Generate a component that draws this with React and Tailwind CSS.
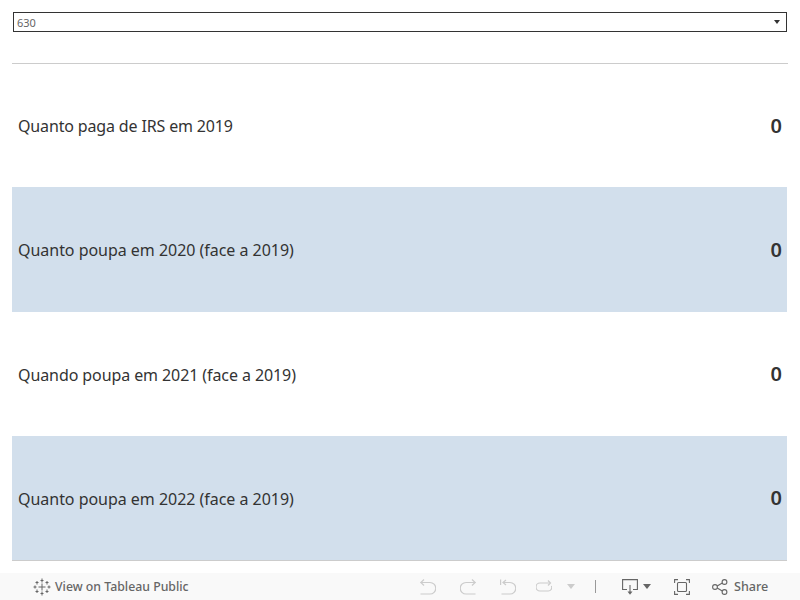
function Row({ label, shaded, value, rowH, track, valueUp }) {
  return (
    <div className={`${rowH} flex items-center justify-between pl-[6px] pr-[5px] ${shaded ? "bg-[#d2dfec]" : "bg-white"}`}>
      <span className={`text-[16px] text-[#333333] leading-none ${track}`}>{label}</span>
      <span className={`text-[20px] font-semibold text-[#333333] leading-none ${valueUp}`}>{value}</span>
    </div>
  );
}

function TableauLogo() {
  return (
    <svg width="18" height="18" viewBox="0 0 18 18" fill="none" stroke="#666666" strokeWidth="1">
      <path d="M9 5.500v7M5.500 9h7" />
      <path d="M9 0.500v4M7.500 2.500h3" />
      <path d="M9 13.500v4M7.500 15.500h3" />
      <path d="M0.500 9h3M2 7.500v3" />
      <path d="M14.500 9h3M16 7.500v3" />
      <path d="M4 3v3.500M2.500 4.500h3" />
      <path d="M14 3v3.500M12.500 4.500h3" />
      <path d="M4 11.500V15M2.500 13.500h3" />
      <path d="M14 11.500V15M12.500 13.500h3" />
    </svg>
  );
}

function Ic({ children, className = "" }) {
  return (
    <svg className={className} width="16" height="16" viewBox="0 0 16 16" fill="none" stroke="#cccccc" strokeWidth="1.2">
      {children}
    </svg>
  );
}

function DarkIc({ children, className = "" }) {
  return (
    <svg className={className} width="16" height="16" viewBox="0 0 16 16" fill="none" stroke="#666666" strokeWidth="1.1">
      {children}
    </svg>
  );
}

export default function App() {
  return (
    <div className="w-[800px] h-[600px] bg-white flex flex-col overflow-hidden font-['Noto_Sans',sans-serif]">
      <div className="pt-3 px-[13px]">
        <div className="h-5 border border-[#333333] flex items-center justify-between pl-[3px] pr-[6px]">
          <span className="text-[11px] text-[#666666] leading-none">630</span>
          <span className="w-0 h-0 border-x-[3px] border-x-transparent border-t-[4px] border-t-[#333333]" />
        </div>
      </div>
      <div className="mt-[31px] mx-3 border-t border-[#cccccc]" />
      <div className="ml-3 border-b border-[#cccccc] w-[775px]">
        <Row rowH="h-[123px]" track="tracking-[-0.15px]" valueUp="" label="Quanto paga de IRS em 2019" value="0" />
        <Row rowH="h-[125px]" track="tracking-[-0.03px]" valueUp="" label="Quanto poupa em 2020 (face a 2019)" value="0" shaded />
        <Row rowH="h-[124px] pt-[2px]" track="tracking-[-0.09px]" valueUp="-mt-[2px]" label="Quando poupa em 2021 (face a 2019)" value="0" />
        <Row rowH="h-[124px] pt-[2px]" track="tracking-[-0.03px]" valueUp="-mt-[2px]" label="Quanto poupa em 2022 (face a 2019)" value="0" shaded />
      </div>
      <div className="mt-[12px] flex-1 bg-[#f9f9f9] flex items-center text-[#666666]">
        <div className="ml-[33px] w-[387px] flex items-center gap-[4px]">
          <TableauLogo />
          <span className="mt-[2px] text-[12.3px] font-medium leading-none">View on Tableau Public</span>
        </div>
        <Ic>
          <path d="M0.500 3.500H10a5.700 5.700 0 0 1 0 11.500H0.500" />
          <path d="M4 0.500 0.800 3.500 4 6.500" />
        </Ic>
        <Ic className="ml-[24px]">
          <path d="M15.500 3.500H6a5.700 5.700 0 0 0 0 11.500h9.500" />
          <path d="M12 0.500l3.200 3L12 6.500" />
        </Ic>
        <Ic className="ml-[24px]">
          <path d="M0.600 0.500v5.500" />
          <path d="M3 3.500h7a5.700 5.700 0 0 1 0 11.500H1.500" />
          <path d="M6 1 3 3.500 6 6" />
        </Ic>
        <Ic className="ml-[20px]">
          <path d="M14 4H4a3.500 3.500 0 0 0 0 8h8a3.500 3.500 0 0 0 3.400-5" />
          <path d="M12 1.500 14.500 4 12 6.500" />
        </Ic>
        <span className="ml-[15px] w-0 h-0 border-x-[4px] border-x-transparent border-t-[5px] border-t-[#cccccc]" />
        <span className="ml-[20px] w-px h-[13px] bg-[#999999]" />
        <DarkIc className="ml-[26px]">
          <path d="M5 10.500H0.600V0.600h14.800v9.900H11" />
          <path d="M8 6v8" />
          <path d="M5.500 12.500H10.500L8 15.800z" fill="#666666" stroke="none" />
        </DarkIc>
        <span className="ml-[5px] w-0 h-0 border-x-[4px] border-x-transparent border-t-[5px] border-t-[#666666]" />
        <DarkIc className="ml-[23px]">
          <path d="M0.600 4V0.600H4M12 0.600h3.400V4M15.400 12v3.400H12M4 15.400H0.600V12" />
          <rect x="3.500" y="3.500" width="9" height="9" rx="1" />
        </DarkIc>
        <DarkIc className="ml-[22px]">
          <circle cx="3" cy="8" r="2.400" />
          <circle cx="12.500" cy="3" r="2.400" />
          <circle cx="12.500" cy="13" r="2.400" />
          <path d="M5.200 7 10.300 4.100M5.200 9l5.100 2.900" />
        </DarkIc>
        <span className="mt-[2px] ml-[6px] text-[12.6px] font-medium leading-none">Share</span>
      </div>
    </div>
  );
}
